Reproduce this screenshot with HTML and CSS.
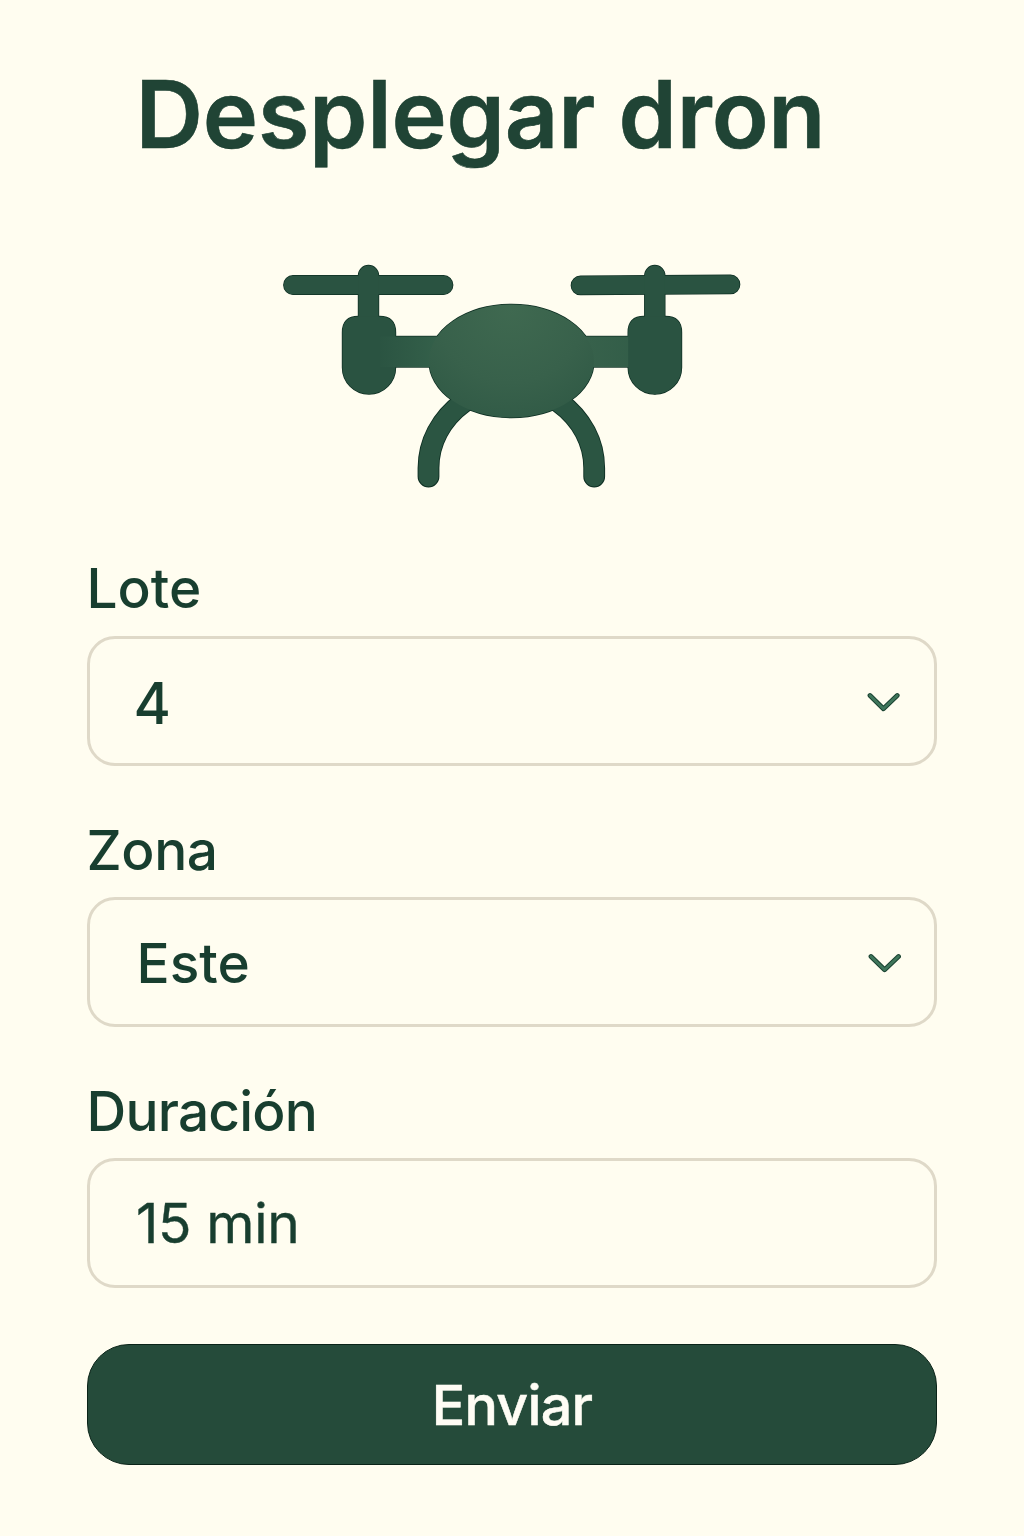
FILE: index.html
```html
<!DOCTYPE html>
<html lang="es">
<head>
  <meta charset="utf-8">
  <meta name="viewport" content="width=device-width, initial-scale=1">
  <title>Desplegar dron</title>
  <link rel="stylesheet" href="styles.css">
</head>
<body>
  <main class="screen">
    <h1 class="title">Desplegar dron</h1>

    <svg class="drone" viewBox="282 264 460 224" aria-hidden="true">
      <defs>
        <radialGradient id="shell" gradientUnits="userSpaceOnUse" cx="511" cy="308" r="150">
          <stop offset="0" stop-color="#3f6950"/>
          <stop offset="0.5" stop-color="#38614b"/>
          <stop offset="1" stop-color="#2b5542"/>
        </radialGradient>
        <linearGradient id="beam" gradientUnits="userSpaceOnUse" x1="375" y1="0" x2="640" y2="0">
          <stop offset="0" stop-color="#2a5341"/>
          <stop offset="0.24" stop-color="#34604a"/>
          <stop offset="0.8" stop-color="#37614b"/>
          <stop offset="1" stop-color="#325d48"/>
        </linearGradient>
        <g id="rotors">
          <path d="M293 275.800 L443.500 275.800 A9 9 0 0 1 443.500 294.200 L293 294.200 A9 9 0 0 1 293 275.800Z"/>
          <path d="M580.500 276.300 L730.500 275.300 A9 9 0 0 1 730.500 293.600 L580.500 294.600 A9 9 0 0 1 580.500 276.300Z"/>
          <rect x="358.500" y="265.500" width="20" height="70" rx="10"/>
          <rect x="644.800" y="265.500" width="20" height="70" rx="10"/>
          <path d="M358.500 316.500 H379.500 Q395.500 316.500 395.500 332.500 V367.500 A26.500 26.500 0 0 1 342.500 367.500 V332.500 Q342.500 316.500 358.500 316.500Z"/>
        </g>
        <rect id="arm" x="380" y="336.500" width="260" height="30.500"/>
        <ellipse id="body" cx="511.500" cy="361" rx="82.500" ry="56.500"/>
        <path id="motor" d="M644 316.500 H665.500 Q681.500 316.500 681.500 332.500 V367.500 A26.650 26.650 0 0 1 628.200 367.500 V332.500 Q628.200 316.500 644 316.500Z"/>
        <path id="legs" d="M428.500 476.500 V468 C428.500 443 440.500 419 464 402 M594.200 476.500 V468 C594.200 443 582.200 419 558.700 402"/>
      </defs>
      <use href="#legs" class="leg-edge"/>
      <use href="#rotors" class="edge"/>
      <use href="#arm" class="edge"/>
      <use href="#body" class="edge"/>
      <use href="#motor" class="edge"/>
      <use href="#legs" class="leg-fill"/>
      <use href="#rotors" class="rotor-fill"/>
      <use href="#arm" class="arm-fill"/>
      <use href="#body" class="body-fill"/>
      <use href="#motor" class="rotor-fill"/>
    </svg>

    <form class="form">
      <div class="field">
        <span class="label label-lote">Lote</span>
        <div class="control">
          <span class="value value-lote">4</span>
          <svg class="chevron chevron-lote" viewBox="0 0 34 22" aria-hidden="true">
            <path class="chevron-edge" d="M4 5.500 L17.400 18.800 L31.200 5.500"/>
            <path class="chevron-line" d="M4 5.500 L17.400 18.800 L31.200 5.500"/>
          </svg>
        </div>
      </div>
      <div class="field">
        <span class="label label-zona">Zona</span>
        <div class="control">
          <span class="value value-zona">Este</span>
          <svg class="chevron" viewBox="0 0 34 22" aria-hidden="true">
            <path class="chevron-edge" d="M4 5.500 L17.600 18.800 L31.500 5.500"/>
            <path class="chevron-line" d="M4 5.500 L17.600 18.800 L31.500 5.500"/>
          </svg>
        </div>
      </div>
      <div class="field">
        <span class="label label-duracion">Duración</span>
        <div class="control">
          <span class="value value-duracion">15 min</span>
        </div>
      </div>
      <button class="submit" type="button">Enviar</button>
    </form>
  </main>
</body>
</html>
```
FILE: styles.css
```css
* {
  box-sizing: border-box;
}

body {
  margin: 0;
  background: #fffdf0;
  color: #183e2f;
  font-family: Inter, "Liberation Sans", sans-serif;
}

.screen {
  display: flex;
  flex-direction: column;
  width: 1024px;
  height: 1536px;
  padding: 54px 87px 0;
}

.title {
  margin: 0;
  padding-left: 48.5px;
  color: #204435;
  font-size: 93.5px;
  font-weight: 600;
  line-height: 120px;
  letter-spacing: -0.2px;
  white-space: nowrap;
  -webkit-text-stroke: 0.6px #1a3d2f;
}

.drone {
  width: 460px;
  height: 224px;
  margin: 90px 0 0 195px;
}

.edge {
  fill: #0e2f23;
  stroke: #0e2f23;
  stroke-width: 1.4px;
}

.rotor-fill {
  fill: #2a5341;
}

.arm-fill {
  fill: url(#beam);
}

.body-fill {
  fill: url(#shell);
}

.leg-edge,
.leg-fill {
  fill: none;
  stroke: #0e2f23;
  stroke-width: 21.8px;
  stroke-linecap: round;
}

.leg-fill {
  stroke: #2b5542;
  stroke-width: 20px;
}

.form {
  display: flex;
  flex-direction: column;
  margin-top: 70px;
}

.field {
  display: flex;
  flex-direction: column;
  gap: 18px;
  height: 208px;
  margin-bottom: 53px;
}

.field:last-of-type {
  margin-bottom: 56px;
}

.label,
.value {
  font-size: 55px;
  font-weight: 500;
  line-height: 60px;
  white-space: nowrap;
}

.label {
  height: 60px;
  margin-left: -0.5px;
}

.label-zona {
  padding-top: 1px;
  letter-spacing: -0.4px;
}

.label-duracion {
  padding-top: 1px;
  letter-spacing: -0.8px;
}

.control {
  display: flex;
  align-items: center;
  justify-content: space-between;
  height: 130px;
  padding: 0 33px 0 45px;
  border: 3px solid #dfd9c8;
  border-radius: 28px;
}

.value-lote {
  padding-top: 6px;
  margin-left: -1.5px;
  font-size: 57px;
}

.value-zona {
  padding: 1px 0 0 1.5px;
}

.value-duracion {
  padding-left: 1px;
  font-weight: 400;
  letter-spacing: -0.3px;
  -webkit-text-stroke: 0.4px #183e2f;
}

.chevron {
  width: 34px;
  height: 22px;
}

.chevron-lote {
  margin-right: 1px;
}

.chevron-edge,
.chevron-line {
  fill: none;
  stroke: #1a4231;
  stroke-width: 4.8px;
  stroke-linecap: round;
  stroke-linejoin: round;
}

.chevron-line {
  stroke: #3f765b;
  stroke-width: 2.8px;
}

.submit {
  height: 121px;
  padding: 0;
  border: 1px solid #0a2318;
  border-radius: 42px;
  background: #254b3a;
  color: #fffdf5;
  font-family: inherit;
  font-size: 55.5px;
  font-weight: 500;
  line-height: 119px;
  letter-spacing: -0.7px;
  -webkit-text-stroke: 0.5px #fffdf5;
}
```
